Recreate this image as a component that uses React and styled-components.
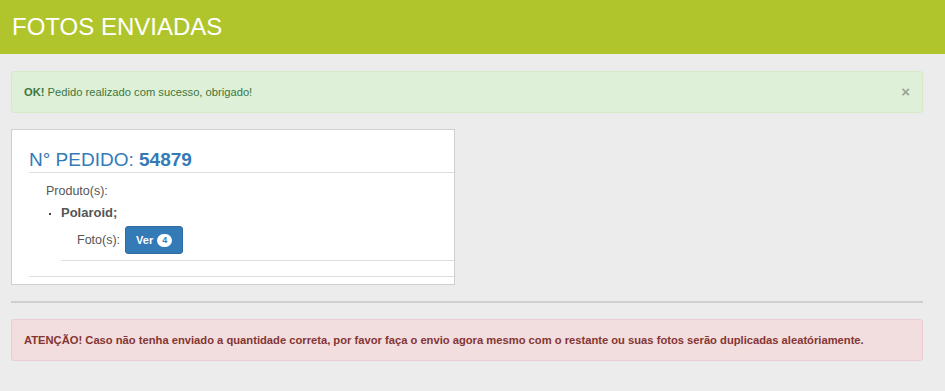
import React from "react";
import styled, { createGlobalStyle } from "styled-components";

const GlobalStyle = createGlobalStyle`
  html, body {
    margin: 0;
    padding: 0;
    background: #ececec;
    font-family: "Liberation Sans", Arial, sans-serif;
    color: #555;
  }
`;

const Header = styled.header`
  background: #b0c52b;
  height: 54px;
  display: flex;
  align-items: center;
  padding: 0 12px;
`;

const Title = styled.h1`
  margin: 0;
  color: #fff;
  font-size: 24px;
  font-weight: normal;
`;

const Content = styled.main`
  padding: 17px 22px 30px 11px;
  display: flex;
  flex-direction: column;
`;

const Alert = styled.div`
  position: relative;
  display: flex;
  align-items: center;
  height: 42px;
  box-sizing: border-box;
  padding: 0 12px;
  border: 1px solid ${(p) => (p.$kind === "success" ? "#d6e9c6" : "#ebccd1")};
  background: ${(p) => (p.$kind === "success" ? "#dff0d8" : "#f2dede")};
  color: ${(p) => (p.$kind === "success" ? "#3c763d" : "#843534")};
  border-radius: 3px;
  font-size: 11.2px;
  font-weight: ${(p) => (p.$bold ? "bold" : "normal")};
`;

const Close = styled.span`
  position: absolute;
  right: 12px;
  top: 50%;
  transform: translateY(-52%);
  color: #9aa596;
  font-size: 15px;
  font-weight: bold;
`;

const Card = styled.section`
  margin-top: 16px;
  width: 444px;
  height: 156px;
  box-sizing: border-box;
  background: #fff;
  border: 1px solid #cfcfcf;
  padding: 20px 0 0 17px;
  overflow: hidden;
`;

const OrderTitle = styled.h2`
  margin: 0;
  padding-bottom: 2px;
  border-bottom: 1px solid #ddd;
  color: #337ab7;
  font-size: 19px;
  font-weight: normal;
  line-height: 20px;

  strong {
    font-weight: bold;
  }
`;

const Label = styled.div`
  font-size: 12.5px;
  color: #555;
  line-height: 16px;
  padding-left: ${(p) => p.$indent || 0}px;
  margin-top: ${(p) => p.$top || 0}px;
`;

const ProductList = styled.ul`
  margin: 6px 0 0;
  padding: 0 0 15px 32px;
  font-size: 12px;
  color: #555;
  border-bottom: 1px solid #ddd;
`;

const ProductItem = styled.li`
  list-style: none;
  position: relative;

  &::before {
    content: "";
    position: absolute;
    left: -12px;
    top: 8px;
    width: 2px;
    height: 2px;
    background: #444;
  }
`;

const ProductName = styled.div`
  font-weight: bold;
  font-size: 13px;
  line-height: 16px;
`;

const PhotosRow = styled.div`
  display: flex;
  align-items: center;
  gap: 5px;
  padding: 0 0 6px 16px;
  margin-top: 5px;
  border-bottom: 1px solid #ddd;
`;

const Button = styled.button`
  display: inline-flex;
  align-items: center;
  gap: 4px;
  height: 28px;
  padding: 0 10px;
  background: #337ab7;
  border: 1px solid #2e6da4;
  border-radius: 3px;
  color: #fff;
  font-family: inherit;
  font-size: 11px;
  font-weight: bold;
`;

const Badge = styled.span`
  display: inline-flex;
  align-items: center;
  justify-content: center;
  min-width: 15px;
  height: 13px;
  padding: 0 1px;
  box-sizing: border-box;
  border-radius: 7px;
  background: #fff;
  color: #337ab7;
  font-size: 9px;
  font-weight: bold;
`;

const Divider = styled.hr`
  margin: 16px 0 16px;
  border: 0;
  border-top: 2px solid #cfcfcf;
`;

export default function App() {
  return (
    <>
      <GlobalStyle />
      <Header>
        <Title>FOTOS ENVIADAS</Title>
      </Header>
      <Content>
        <Alert $kind="success">
          <span>
            <strong>OK!</strong> Pedido realizado com sucesso, obrigado!
          </span>
          <Close>×</Close>
        </Alert>
        <Card>
          <OrderTitle>
            N° PEDIDO: <strong>54879</strong>
          </OrderTitle>
          <Label $indent={17} $top={10}>
            Produto(s):
          </Label>
          <ProductList>
            <ProductItem>
              <ProductName>Polaroid;</ProductName>
              <PhotosRow>
                <Label>Foto(s):</Label>
                <Button>
                  Ver <Badge>4</Badge>
                </Button>
              </PhotosRow>
            </ProductItem>
          </ProductList>
        </Card>
        <Divider />
        <Alert $kind="danger" $bold>
          ATENÇÃO! Caso não tenha enviado a quantidade correta, por favor faça o
          envio agora mesmo com o restante ou suas fotos serão duplicadas
          aleatóriamente.
        </Alert>
      </Content>
    </>
  );
}
